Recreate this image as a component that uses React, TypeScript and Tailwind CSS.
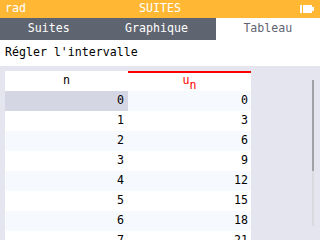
import React from 'react';

const rows = [0, 1, 2, 3, 4, 5, 6, 7];

const Battery: React.FC = () => (
  <svg width="15" height="8" viewBox="0 0 15 8" className="block">
    <rect x="0" y="0" width="2" height="8" fill="#fff" />
    <rect x="3" y="0" width="9" height="8" fill="#fff" />
    <rect x="12" y="2" width="2" height="4" fill="#fff" />
  </svg>
);

const App: React.FC = () => {
  return (
    <div
      className="relative h-[240px] w-[320px] overflow-hidden bg-[#e4e5ee] text-[11.6px] leading-none"
      style={{ fontFamily: '"DejaVu Sans Mono", monospace' }}
    >
      <div className="flex h-[18px] items-center justify-between bg-[#ffb734] px-[5px] text-white">
        <span>rad</span>
        <span className="absolute left-0 right-0 text-center">SUITES</span>
        <span className="relative">
          <Battery />
        </span>
      </div>
      <div className="flex h-[22px] bg-[#5f6570]">
        <div className="flex flex-auto items-center justify-center text-white">Suites</div>
        <div className="flex flex-auto items-center justify-center text-white">Graphique</div>
        <div className="flex flex-auto items-center justify-center bg-white text-[#5f6570]">
          Tableau
        </div>
      </div>
      <div className="flex h-[26px] items-center bg-white px-[5px] text-black">
        Régler l'intervalle
      </div>
      <div className="ml-[5px] mt-[5px] flex w-[246px] text-black">
        <div className="flex w-[123px] flex-col">
          <div className="flex h-[20px] items-center justify-center bg-white">n</div>
          {rows.map((r) => (
            <div
              key={r}
              className={
                'flex h-[20px] items-center justify-end pr-[4px] ' +
                (r === 0 ? 'bg-[#d4d7e3]' : r % 2 === 0 ? 'bg-[#f6f9fe]' : 'bg-white')
              }
            >
              {r}
            </div>
          ))}
        </div>
        <div className="flex w-[123px] flex-col">
          <div className="flex h-[20px] items-center justify-center border-t-2 border-[#ff0000] bg-white text-[#ff0000]">
            <span className="-mt-[2px]">u</span>
            <span className="mt-[8px]">n</span>
          </div>
          {rows.map((r) => (
            <div
              key={r}
              className={
                'flex h-[20px] items-center justify-end pr-[3px] ' +
                (r % 2 === 0 ? 'bg-[#f6f9fe]' : 'bg-white')
              }
            >
              {r * 3}
            </div>
          ))}
        </div>
      </div>
      <div className="absolute left-[312px] top-[80px] h-[146px] w-[2px] bg-[#d9d9e0]">
        <div className="h-[91px] w-[2px] bg-[#a0a0a6]" />
      </div>
    </div>
  );
};

export default App;
